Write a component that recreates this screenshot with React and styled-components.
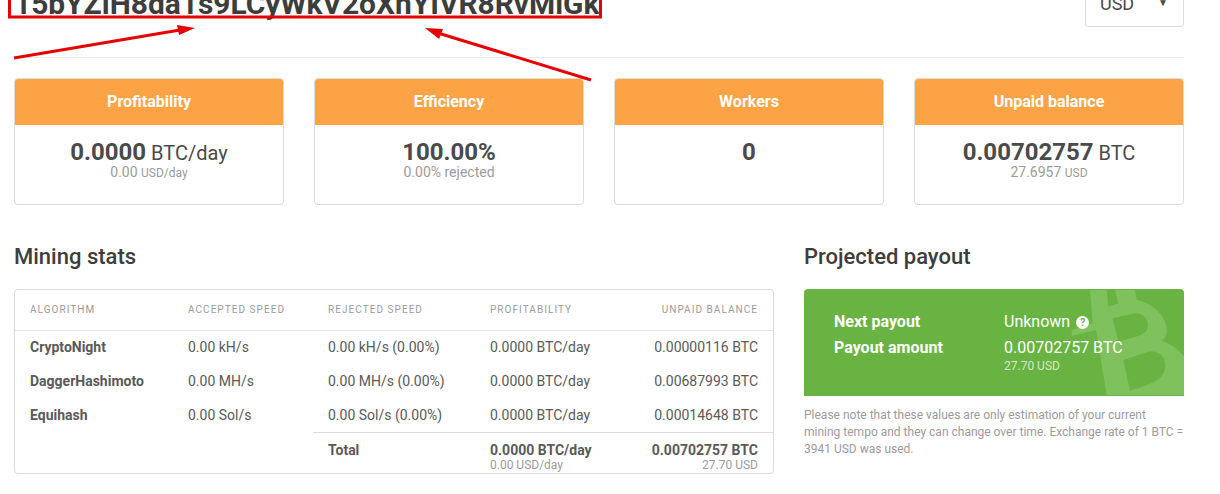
import React from 'react';
import styled, { createGlobalStyle } from 'styled-components';

const GlobalStyle = createGlobalStyle`
    html, body {
        margin: 0;
        padding: 0;
        background: #fff;
        overflow: hidden;
    }
    body {
        font-family: Roboto, "Liberation Sans", sans-serif;
        color: #4a4a4a;
    }
`;

const Page = styled.div`
    position: relative;
    width: 1220px;
    height: 494px;
    overflow: hidden;
    box-sizing: border-box;
    padding: 0 36px 0 14px;
`;

const Header = styled.div`
    display: flex;
    justify-content: space-between;
    align-items: flex-end;
    height: 58px;
    box-sizing: border-box;
    border-bottom: 1px solid #e9e9e9;
    padding-bottom: 30px;
`;

const Address = styled.h1`
    margin: 0 0 8px 0;
    font-size: 29.9px;
    line-height: 30px;
    font-weight: 700;
    color: #3d3d3d;
    white-space: nowrap;
`;

const CurrencySelect = styled.div`
    width: 99px;
    height: 40px;
    box-sizing: border-box;
    border: 1px solid #dcdcdc;
    border-radius: 3px;
    display: flex;
    justify-content: space-between;
    align-items: center;
    padding: 0 15px 8px 14px;
    font-size: 18px;
    color: #4a4a4a;
    flex: none;
`;

const Caret = styled.span`
    font-size: 10px;
    position: relative;
    top: -1px;
`;

const Cards = styled.div`
    display: grid;
    grid-template-columns: repeat(4, 270px);
    gap: 30px;
    margin-top: 20px;
`;

const Card = styled.div`
    height: 127px;
    box-sizing: border-box;
    border: 1px solid #dcdcdc;
    border-radius: 4px;
    overflow: hidden;
    text-align: center;
`;

const CardHead = styled.div`
    height: 47px;
    margin: -1px -1px 0;
    background: #fca345;
    color: #fff;
    font-size: 16px;
    font-weight: 700;
    line-height: 47px;
`;

const CardValue = styled.div`
    margin-top: 15px;
    font-size: 20px;
    line-height: 24px;
    color: #4a4a4a;

    b {
        font-size: 24px;
        font-weight: 700;
    }
`;

const CardSub = styled.div`
    font-size: 14px;
    line-height: 15px;
    color: #9b9b9b;

    small {
        font-size: 12px;
    }
`;

const Columns = styled.div`
    display: grid;
    grid-template-columns: 760px 380px;
    gap: 30px;
    margin-top: 38px;
`;

const SectionTitle = styled.h2`
    margin: 0 0 18px;
    font-size: 22px;
    line-height: 28px;
    font-weight: 500;
    color: #3d3d3d;
`;

const TableBox = styled.div`
    height: 185px;
    box-sizing: border-box;
    border: 1px solid #dcdcdc;
    border-radius: 4px;
    overflow: hidden;
`;

const StatsTable = styled.table`
    width: 100%;
    border-collapse: collapse;
    table-layout: fixed;
    font-size: 14px;
    color: #5a5a5a;
`;

const Th = styled.th`
    height: 40px;
    box-sizing: border-box;
    padding: 0 ${p => p.$right ? '15px' : '0'} 0 ${p => p.$pad ? '15px' : '0'};
    border-bottom: 1px solid #e3e3e3;
    font-size: 10px;
    font-weight: 400;
    letter-spacing: 1.05px;
    color: #9b9b9b;
    text-transform: uppercase;
    text-align: ${p => p.$right ? 'right' : 'left'};
`;

const Td = styled.td`
    height: 34px;
    box-sizing: border-box;
    padding: 0 ${p => p.$right ? '15px' : '0'} 0 ${p => p.$pad ? '15px' : '0'};
    text-align: ${p => p.$right ? 'right' : 'left'};
    font-weight: ${p => p.$bold ? 700 : 400};
    white-space: nowrap;
`;

const TotalCell = styled.td`
    padding: 9px ${p => p.$right ? '15px' : '0'} 0 ${p => p.$pad ? '15px' : '0'};
    border-top: 1px solid #dcdcdc;
    text-align: ${p => p.$right ? 'right' : 'left'};
    vertical-align: top;
    font-weight: 700;
    line-height: 16px;
    white-space: nowrap;
`;

const TotalSub = styled.div`
    font-size: 12px;
    line-height: 14px;
    font-weight: 400;
    color: #9b9b9b;
`;

const PayoutBox = styled.div`
    position: relative;
    height: 107px;
    box-sizing: border-box;
    padding: 20px 30px 0;
    border-radius: 4px 4px 0 0;
    background: #69b342;
    color: #fff;
    overflow: hidden;
`;

const Watermark = styled.svg`
    position: absolute;
    left: 266px;
    top: -9px;
    width: 120px;
    height: 125px;
    fill: #7fc15c;
`;

const PayoutRow = styled.div`
    position: relative;
    display: grid;
    grid-template-columns: 170px 1fr;
    font-size: 16px;
    line-height: 26px;

    b {
        font-weight: 700;
    }
`;

const PayoutSub = styled.div`
    position: relative;
    margin-left: 170px;
    font-size: 12px;
    line-height: 14px;
    margin-top: -2px;
    color: #d3e8c6;
`;

const HelpDot = styled.span`
    display: inline-block;
    width: 13px;
    height: 13px;
    margin-left: 6px;
    border-radius: 50%;
    background: #fff;
    color: #69b342;
    font-size: 10px;
    font-weight: 700;
    line-height: 13px;
    text-align: center;
    vertical-align: 1px;
`;

const Note = styled.p`
    margin: 11px 0 0;
    font-size: 12px;
    line-height: 17px;
    color: #9b9b9b;
`;

const Annotation = styled.svg`
    position: absolute;
    left: 0;
    top: 0;
    pointer-events: none;
`;

const rows = [
    ['CryptoNight', '0.00 kH/s', '0.00 kH/s (0.00%)', '0.0000 BTC/day', '0.00000116 BTC'],
    ['DaggerHashimoto', '0.00 MH/s', '0.00 MH/s (0.00%)', '0.0000 BTC/day', '0.00687993 BTC'],
    ['Equihash', '0.00 Sol/s', '0.00 Sol/s (0.00%)', '0.0000 BTC/day', '0.00014648 BTC'],
];

const App = () => (
    <Page>
        <GlobalStyle />
        <Header>
            <Address>15bYZiH8da1s9LCyWkV2oXnYIVR8RvMiGk</Address>
            <CurrencySelect>USD <Caret>▼</Caret></CurrencySelect>
        </Header>

        <Cards>
            <Card>
                <CardHead>Profitability</CardHead>
                <CardValue><b>0.0000</b> BTC/day</CardValue>
                <CardSub>0.00 <small>USD/day</small></CardSub>
            </Card>
            <Card>
                <CardHead>Efficiency</CardHead>
                <CardValue><b>100.00%</b></CardValue>
                <CardSub>0.00% rejected</CardSub>
            </Card>
            <Card>
                <CardHead>Workers</CardHead>
                <CardValue><b>0</b></CardValue>
            </Card>
            <Card>
                <CardHead>Unpaid balance</CardHead>
                <CardValue><b>0.00702757</b> BTC</CardValue>
                <CardSub>27.6957 <small>USD</small></CardSub>
            </Card>
        </Cards>

        <Columns>
            <div>
                <SectionTitle>Mining stats</SectionTitle>
                <TableBox>
                    <StatsTable>
                        <colgroup>
                            <col style={{ width: 173 }} />
                            <col style={{ width: 125 }} />
                            <col style={{ width: 177 }} />
                            <col style={{ width: 130 }} />
                            <col />
                        </colgroup>
                        <thead>
                            <tr>
                                <Th $pad>Algorithm</Th>
                                <Th>Accepted speed</Th>
                                <Th $pad>Rejected speed</Th>
                                <Th>Profitability</Th>
                                <Th $right>Unpaid balance</Th>
                            </tr>
                        </thead>
                        <tbody>
                            {rows.map(r => (
                                <tr key={r[0]}>
                                    <Td $pad $bold>{r[0]}</Td>
                                    <Td>{r[1]}</Td>
                                    <Td $pad>{r[2]}</Td>
                                    <Td>{r[3]}</Td>
                                    <Td $right>{r[4]}</Td>
                                </tr>
                            ))}
                            <tr>
                                <td colSpan={2} />
                                <TotalCell $pad>Total</TotalCell>
                                <TotalCell>0.0000 BTC/day<TotalSub>0.00 USD/day</TotalSub></TotalCell>
                                <TotalCell $right>0.00702757 BTC<TotalSub>27.70 USD</TotalSub></TotalCell>
                            </tr>
                        </tbody>
                    </StatsTable>
                </TableBox>
            </div>
            <div>
                <SectionTitle>Projected payout</SectionTitle>
                <PayoutBox>
                    <Watermark viewBox="0 0 360 375">
                        <path
                            fillRule="evenodd"
                            d="M60 30 L110 30 L115 80 L145 70 L135 30 L195 30 L200 60 C250 70 290 110 290 150 C292 165 285 175 275 182 C310 195 345 220 360 260 L360 345 L110 345 L78 150 L5 168 L5 150 L68 130 Z
                               M128 115 L195 100 C225 100 240 125 232 145 C228 165 200 170 145 185 Z
                               M160 240 L235 215 C275 210 290 240 285 265 C280 300 240 315 180 332 Z"
                        />
                    </Watermark>
                    <PayoutRow><b>Next payout</b><span>Unknown<HelpDot>?</HelpDot></span></PayoutRow>
                    <PayoutRow><b>Payout amount</b><span>0.00702757 BTC</span></PayoutRow>
                    <PayoutSub>27.70 USD</PayoutSub>
                </PayoutBox>
                <Note>Please note that these values are only estimation of your current mining tempo and they can change over time. Exchange rate of 1 BTC = 3941 USD was used.</Note>
            </div>
        </Columns>

        <Annotation width="1220" height="494" viewBox="0 0 1220 494">
            <rect x="9.5" y="-10" width="591" height="27" fill="none" stroke="#e60000" strokeWidth="3" />
            <line x1="14" y1="58" x2="180" y2="30" stroke="#e60000" strokeWidth="3" />
            <polygon points="195,28 177,25 179,35" fill="#e60000" />
            <line x1="591" y1="80" x2="438" y2="33" stroke="#e60000" strokeWidth="3" />
            <polygon points="425,28 443,29 439,39" fill="#e60000" />
        </Annotation>
    </Page>
);

export default App;
